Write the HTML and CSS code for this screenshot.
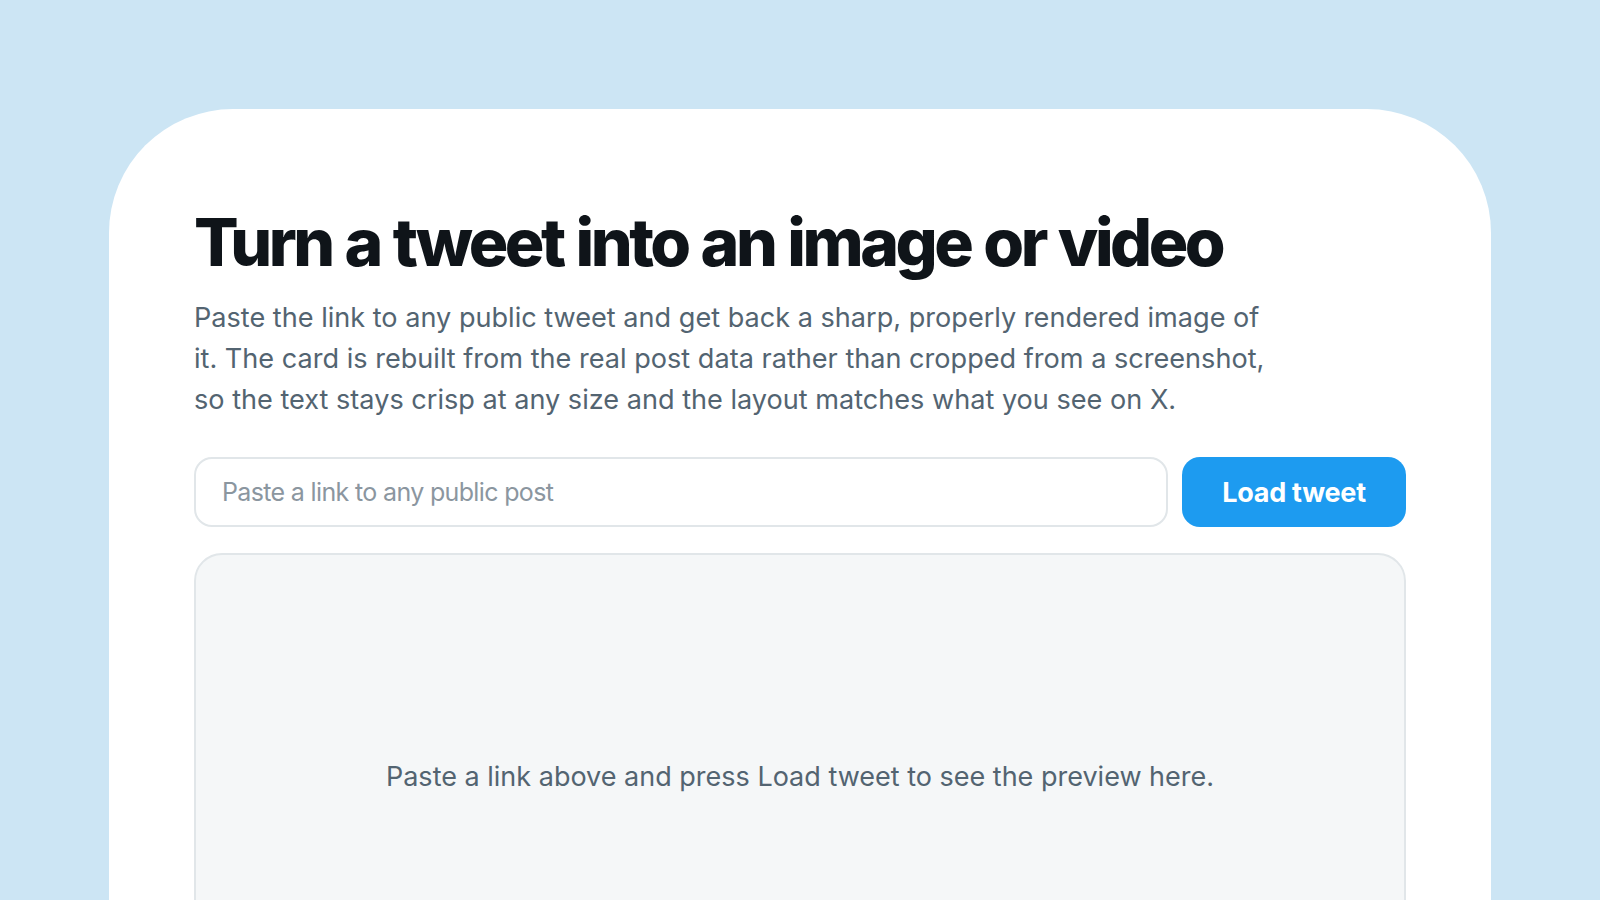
FILE: index.html
```html
<!DOCTYPE html>
<html lang="en">
<head>
<meta charset="utf-8">
<title>Tweet to image</title>
<link rel="stylesheet" href="styles.css">
</head>
<body>
<main class="card">
  <h1 class="title">Turn a tweet into an image or video</h1>
  <p class="lead">Paste the link to any public tweet and get back a sharp, properly rendered image of it. The card is rebuilt from the real post data rather than cropped from a screenshot, so the text stays crisp at any size and the layout matches what you see on X.</p>
  <form class="loader">
    <input class="url" type="text" placeholder="Paste a link to any public post">
    <button class="load" type="button">Load tweet</button>
  </form>
  <section class="preview">
    <p class="hint">Paste a link above and press Load tweet to see the preview here.</p>
  </section>
</main>
</body>
</html>
```

FILE: styles.css
```css
html, body {
  margin: 0;
  padding: 0;
  height: 100%;
}
body {
  background: #cce5f4;
  font-family: Inter, "Noto Sans", "Liberation Sans", sans-serif;
  overflow: hidden;
}
.card {
  margin: 109px 109px 0;
  background: #ffffff;
  border-radius: 124px 124px 0 0;
  padding: 97px 85px 60px;
  min-height: 900px;
  box-sizing: border-box;
}
.title {
  margin: 0;
  font-size: 66px;
  line-height: 72px;
  font-weight: 800;
  letter-spacing: -0.053em;
  word-spacing: 2px;
  color: #0f1419;
}
.lead {
  margin: 19px 0 0;
  max-width: 1082px;
  font-size: 27.1px;
  line-height: 41px;
  color: #536471;
}
.loader {
  display: flex;
  gap: 14px;
  margin-top: 37px;
}
.url {
  flex: 1;
  height: 70px;
  box-sizing: border-box;
  border: 2px solid #e1e6e9;
  border-radius: 18px;
  padding: 0 26px;
  font-family: inherit;
  font-size: 25px;
  letter-spacing: -0.026em;
  color: #0f1419;
  background: #fff;
  outline: none;
}
.url::placeholder {
  color: #8b969f;
}
.load {
  width: 224px;
  height: 70px;
  border: none;
  border-radius: 18px;
  background: #1d9bf0;
  color: #ffffff;
  font-family: inherit;
  font-size: 27px;
  font-weight: 700;
  letter-spacing: -0.01em;
}
.preview {
  margin-top: 26px;
  height: 446px;
  box-sizing: border-box;
  border: 2px solid #e1e6e9;
  border-radius: 28px;
  background: #f5f7f8;
  display: flex;
  align-items: center;
  justify-content: center;
}
.hint {
  margin: 0;
  font-size: 27px;
  color: #536471;
}
```
